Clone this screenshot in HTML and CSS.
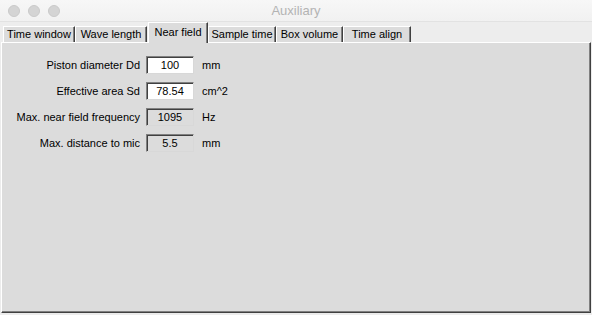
FILE: index.html
```html
<!DOCTYPE html>
<html lang="en">
<head>
    <meta charset="UTF-8">
    <meta name="viewport" content="width=device-width, initial-scale=1.0">
    <title>Auxiliary</title>
    <link rel="stylesheet" href="styles.css">
</head>
<body>

    <div class="titlebar">
        <div class="lights">
            <span class="light"></span>
            <span class="light"></span>
            <span class="light"></span>
        </div>
        <div class="title">Auxiliary</div>
        <div></div>
    </div>

    <div class="tabs">
        <div class="tab" style="width: 72px">Time window</div>
        <div class="tab" style="width: 72px">Wave length</div>
        <div class="tab active" style="width: 60px">Near field</div>
        <div class="tab" style="width: 68px">Sample time</div>
        <div class="tab" style="width: 67px">Box volume</div>
        <div class="tab" style="width: 68px">Time align</div>
    </div>

    <div class="panel">
        <div class="form">
            <label for="dd">Piston diameter Dd</label>
            <input type="text" id="dd" value="100">
            <span class="unit">mm</span>

            <label for="sd">Effective area Sd</label>
            <input type="text" id="sd" value="78.54">
            <span class="unit">cm^2</span>

            <label for="freq">Max. near field frequency</label>
            <input type="text" id="freq" value="1095" class="readonly" readonly>
            <span class="unit">Hz</span>

            <label for="dist">Max. distance to mic</label>
            <input type="text" id="dist" value="5.5" class="readonly" readonly>
            <span class="unit">mm</span>
        </div>
    </div>

</body>
</html>
```

FILE: styles.css
```css
* {
    box-sizing: border-box;
    margin: 0;
    padding: 0;
}

body {
    font-family: "Liberation Sans", Arial, sans-serif;
    font-size: 11px;
    background-color: #ececec;
    width: 592px;
    height: 315px;
    overflow: hidden;
}

.titlebar {
    height: 22px;
    display: grid;
    grid-template-columns: 1fr auto 1fr;
    align-items: center;
    background: linear-gradient(#f7f7f7, #f1f1f1);
    border-bottom: 1px solid #e2e2e2;
}

.lights {
    display: flex;
    gap: 8px;
    padding-left: 8px;
}

.light {
    width: 12px;
    height: 12px;
    border-radius: 50%;
    background-color: #d4d4d4;
    border: 1px solid #cacaca;
}

.title {
    font-size: 13px;
    color: #b3b3b3;
}

.tabs {
    display: flex;
    align-items: flex-end;
    height: 20px;
    padding-left: 3px;
    background-color: #ededed;
}

.tab {
    height: 16px;
    line-height: 14px;
    text-align: center;
    color: #000;
    background-color: #dcdcdc;
    border-top: 1px solid #ffffff;
    border-left: 1px solid #ffffff;
    border-right: 1px solid #404040;
    box-shadow: inset -1px 0 0 #808080;
    white-space: nowrap;
}

.tab.active {
    height: 21px;
    line-height: 18px;
    margin-bottom: -1px;
    margin-left: 1px;
    position: relative;
    z-index: 1;
}

.panel {
    height: 271px;
    margin: 0 1px;
    background-color: #dcdcdc;
    border-top: 1px solid #ffffff;
    border-left: 1px solid #ffffff;
    border-right: 1px solid #404040;
    border-bottom: 1px solid #404040;
    box-shadow: inset -1px -1px 0 #808080;
}

.form {
    display: grid;
    grid-template-columns: 144px 48px auto;
    grid-auto-rows: 18px;
    row-gap: 8px;
    align-items: center;
    padding-top: 13px;
}

label {
    text-align: right;
    padding-right: 6px;
    color: #000;
}

input {
    width: 48px;
    height: 18px;
    font-family: inherit;
    font-size: 11px;
    text-align: center;
    color: #000;
    background-color: #ffffff;
    border-top: 1px solid #808080;
    border-left: 1px solid #808080;
    border-right: 1px solid #d8d8d8;
    border-bottom: 1px solid #d8d8d8;
    box-shadow: inset 1px 1px 0 #404040;
    outline: none;
}

input.readonly {
    background-color: #dcdcdc;
}

.unit {
    padding-left: 8px;
}
```
